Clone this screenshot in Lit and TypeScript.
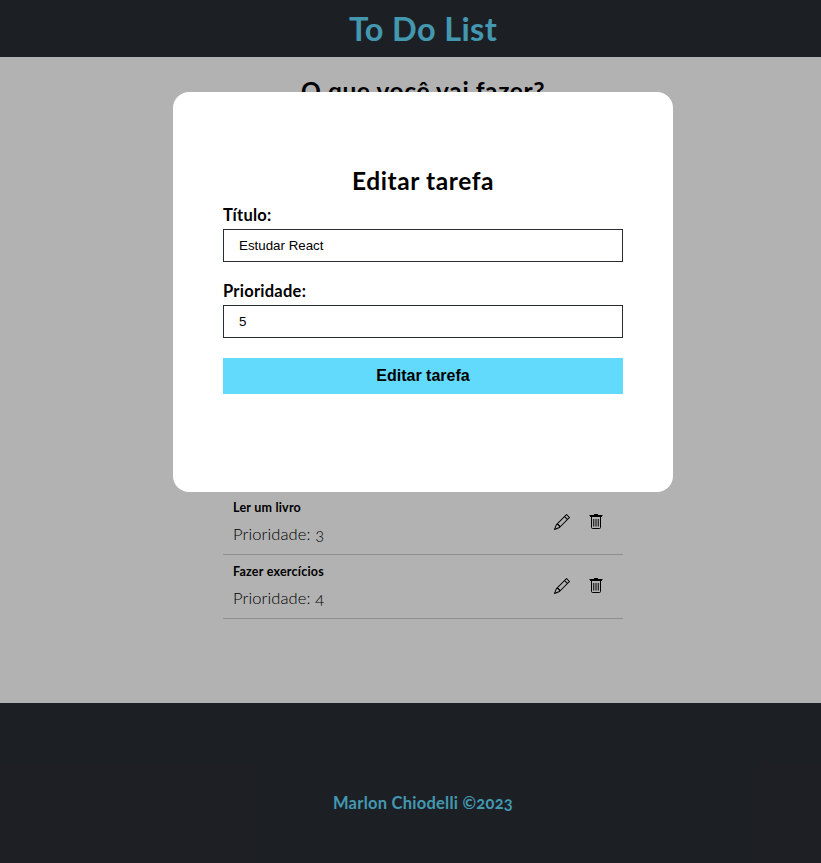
import { LitElement, html, css } from "lit";
import { customElement, state } from "lit/decorators.js";

interface Task {
  title: string;
  priority: number;
}

const pencil = html`<svg class="icon" viewBox="0 0 16 16" width="16" height="16" fill="currentColor">
  <path d="M12.146.146a.5.5 0 0 1 .708 0l3 3a.5.5 0 0 1 0 .708l-10 10a.5.5 0 0 1-.168.11l-5 2a.5.5 0 0 1-.65-.65l2-5a.5.5 0 0 1 .11-.168l10-10zM11.207 2.5 13.5 4.793 14.793 3.5 12.5 1.207 11.207 2.5zm1.586 3L10.5 3.207 4 9.707V10h.5a.5.5 0 0 1 .5.5v.5h.5a.5.5 0 0 1 .5.5v.5h.293l6.5-6.5zm-9.761 5.175-.106.106-1.528 3.821 3.821-1.528.106-.106A.5.5 0 0 1 5 12.5V12h-.5a.5.5 0 0 1-.5-.5V11h-.5a.5.5 0 0 1-.468-.325z"/>
</svg>`;

const trash = html`<svg class="icon" viewBox="0 0 16 16" width="16" height="16" fill="none" stroke="currentColor">
  <path d="M6 .5h4M1.5 1.5h13M2 2.5h12"/>
  <path d="M3.5 3v10.5a1 1 0 0 0 1 1h7a1 1 0 0 0 1-1V3"/>
  <path d="M5.75 5v7.5M8 5v7.5M10.25 5v7.5"/>
</svg>`;

@customElement("app-root")
export class AppRoot extends LitElement {
  @state() private tasks: Task[] = [
    { title: "Ler um livro", priority: 3 },
    { title: "Fazer exercícios", priority: 4 },
  ];

  static styles = css`
    :host { display: block; height: 863px; overflow: hidden; position: relative; font-family: Lato, sans-serif; font-variant-numeric: oldstyle-nums; color: #000; background: #fff; }
    * { box-sizing: border-box; }
    h1, h2, h3, p { margin: 0; }
    .page { width: 846px; height: 863px; display: flex; flex-direction: column; }
    header { height: 57px; background: #292d34; color: #61dafb; display: flex; align-items: center; justify-content: center; }
    h1 { font-size: 32.5px; line-height: 38px; font-weight: 700; letter-spacing: 0.35px; padding-top: 1px; white-space: nowrap; }
    main { flex: 1; width: 400px; margin: 0 auto; display: flex; flex-direction: column; padding: 20px 0 84px; }
    h2 { font-size: 24.5px; line-height: 28px; font-weight: 700; letter-spacing: 0.6px; text-align: center; white-space: nowrap; }
    .list { margin-top: auto; }
    .task { height: 64px; padding: 0 10px; display: flex; align-items: center; justify-content: space-between; border-bottom: 1px solid #ccc; }
    .task h3 { font-size: 12.5px; line-height: 14px; font-weight: 700; letter-spacing: 0.22px; margin-bottom: 10px; }
    .task p { font-size: 16.5px; line-height: 19px; font-weight: 300; letter-spacing: 0.12px; }
    .actions { display: flex; gap: 18px; padding: 0 9px 2px 0; }
    .icon { display: block; }
    footer { height: 160px; background: #292d34; color: #61dafb; display: flex; justify-content: center; padding-top: 91px; font-weight: 700; font-size: 16.5px; line-height: 19px; letter-spacing: 0.25px; }
    .overlay { position: absolute; inset: 0; background: rgba(0, 0, 0, 0.3); }
    .modal { position: absolute; top: 92px; left: 173px; width: 500px; height: 400px; background: #fff; border-radius: 16px; padding: 75px 50px 0; display: flex; flex-direction: column; }
    .modal h2 { margin-bottom: 11px; }
    label { font-size: 16.5px; line-height: 19px; font-weight: 700; letter-spacing: 0.25px; margin-bottom: 4px; }
    input { height: 33px; border: 1px solid #282c34; border-radius: 0; padding: 0 15px; margin: 0 0 20px; font: 13.333px "Liberation Sans", sans-serif; color: #000; background: #fff; outline: none; }
    button { height: 36px; border: 0; padding: 0; background: #61dafb; color: #000; font: 700 16px "Liberation Sans", sans-serif; }
  `;

  render() {
    return html`
      <div class="page">
        <header><h1>To Do List</h1></header>
        <main>
          <h2>O que você vai fazer?</h2>
          <div class="list">
            ${this.tasks.map((t) => html`
              <div class="task">
                <div><h3>${t.title}</h3><p>Prioridade: ${t.priority}</p></div>
                <div class="actions">${pencil}${trash}</div>
              </div>`)}
          </div>
        </main>
        <footer><p>Marlon Chiodelli ©2023</p></footer>
      </div>
      <div class="overlay"></div>
      <div class="modal">
        <h2>Editar tarefa</h2>
        <label>Título:</label>
        <input type="text" .value=${"Estudar React"} />
        <label>Prioridade:</label>
        <input type="text" .value=${"5"} />
        <button>Editar tarefa</button>
      </div>
    `;
  }
}
